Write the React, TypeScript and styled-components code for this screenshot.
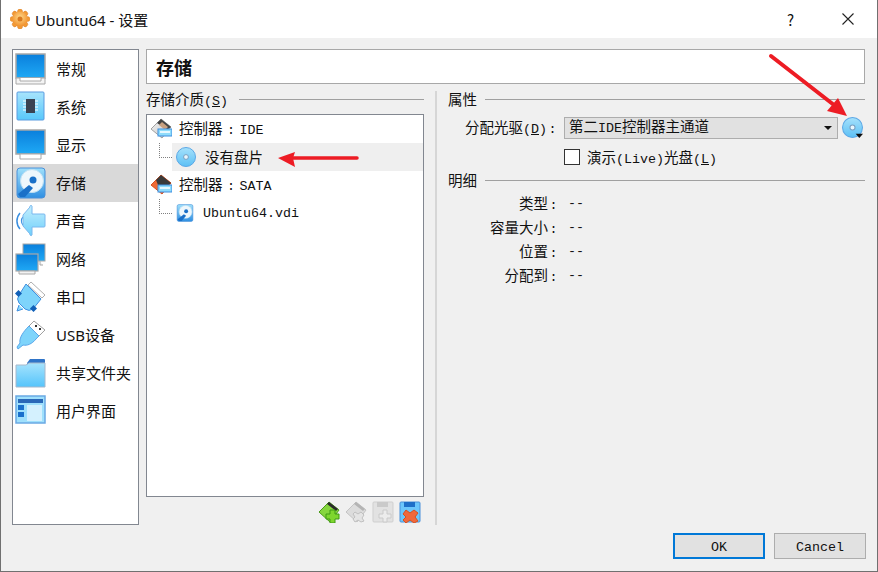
import React from "react";
import styled, { createGlobalStyle } from "styled-components";

const GlobalStyle = createGlobalStyle`
  html, body {
    margin: 0;
    padding: 0;
    background: #f0f0f0;
  }
`;

const cjk = `"Noto Sans CJK SC", "Noto Sans", sans-serif`;

const Window = styled.div`
  position: relative;
  box-sizing: border-box;
  width: 878px;
  height: 572px;
  display: flex;
  flex-direction: column;
  background: #f0f0f0;
  border-left: 1px solid #707070;
  border-right: 1px solid #707070;
  border-bottom: 1px solid #707070;
  color: #111;
  font-family: ${cjk};
  font-size: 14.5px;
  overflow: hidden;
`;

const TitleBar = styled.div`
  height: 38px;
  flex: none;
  display: flex;
  align-items: center;
  background: #fff;
  padding-left: 9px;
`;

const TitleText = styled.span`
  margin-left: 5px;
  font-size: 15px;
  flex: 1;
  font-family: "Noto Sans", ${cjk};
`;

const TitleButton = styled.span<{ $width: number }>`
  width: ${({ $width }) => $width}px;
  text-align: center;
  font-size: 15px;
`;

const CloseGlyph = styled.svg`
  display: block;
  margin: 0 auto;
`;

const Body = styled.div`
  flex: 1;
  min-height: 0;
  display: flex;
  padding: 11px 12px 0 11px;
  gap: 7px;
`;

const Sidebar = styled.div`
  box-sizing: border-box;
  width: 127px;
  height: 476px;
  flex: none;
  background: #fff;
  border: 1px solid #828790;
  display: flex;
  flex-direction: column;
`;

const SideRow = styled.div<{ $active?: boolean }>`
  height: 38px;
  flex: none;
  display: flex;
  align-items: center;
  padding-left: 2px;
  gap: 9px;
  background: ${({ $active }) => ($active ? "#d9d9d9" : "transparent")};
  white-space: nowrap;
  font-family: "Noto Sans", ${cjk};
  font-size: 15px;
`;

/* the CJK face sits low in its line box, this lifts a caption back up */
const Caption = styled.span<{ $lift?: number }>`
  padding-bottom: ${({ $lift }) => $lift ?? 2}px;
  white-space: nowrap;
`;

const Main = styled.div`
  flex: 1;
  min-width: 0;
  display: flex;
  flex-direction: column;
  height: 476px;
`;

const Header = styled.div`
  box-sizing: border-box;
  height: 35px;
  flex: none;
  background: #fff;
  border: 1px solid #a8a8a8;
  display: flex;
  align-items: center;
  padding-left: 9px;
  font-size: 18px;
  font-weight: 700;
`;

const Columns = styled.div`
  flex: 1;
  min-height: 0;
  display: flex;
  padding-top: 7px;
`;

const LeftPane = styled.div`
  width: 278px;
  flex: none;
  display: flex;
  flex-direction: column;
`;

const Splitter = styled.div`
  width: 2px;
  flex: none;
  margin: 0 11px;
  background: #d6d6d6;
`;

const RightPane = styled.div`
  flex: 1;
  min-width: 0;
  display: flex;
  flex-direction: column;
`;

const GroupTitle = styled.div<{ $gap?: number }>`
  height: 16px;
  flex: none;
  display: flex;
  align-items: center;
  gap: ${({ $gap }) => $gap ?? 8}px;
  white-space: nowrap;
  &::after {
    content: "";
    flex: 1;
    height: 1px;
    background: #a0a0a0;
  }
`;

const Mono = styled.span`
  font-family: "Liberation Mono", monospace;
  font-size: 13.33px;
`;

const Colon = styled(Mono)<{ $width: number }>`
  display: inline-block;
  width: ${({ $width }) => $width}px;
  text-align: center;
`;

const Hot = styled.span`
  text-decoration: underline;
`;

const Tree = styled.div`
  box-sizing: border-box;
  height: 383px;
  margin-top: 7px;
  flex: none;
  background: #fff;
  border: 1px solid #828790;
  display: flex;
  flex-direction: column;
`;

const TreeRow = styled.div<{ $child?: boolean; $selected?: boolean }>`
  position: relative;
  height: 28px;
  flex: none;
  display: flex;
  align-items: center;
  margin-left: ${({ $child }) => ($child ? "25px" : "0")};
  padding-left: ${({ $child }) => ($child ? "4px" : "3px")};
  gap: ${({ $child }) => ($child ? "9px" : "7px")};
  background: ${({ $selected }) => ($selected ? "#efefef" : "transparent")};
  ${({ $child }) =>
    $child &&
    `&::before {
      content: "";
      position: absolute;
      left: -13px;
      top: 0;
      width: 12px;
      height: 14px;
      border-left: 1px dotted #808080;
      border-bottom: 1px dotted #808080;
    }`}
`;

const TreeTools = styled.div`
  flex: none;
  display: flex;
  justify-content: flex-end;
  gap: 5px;
  padding: 4px 3px 0 0;
`;

const ComboRow = styled.div`
  display: flex;
  align-items: center;
  margin-top: 9px;
  padding-left: 17px;
`;

const ComboLabel = styled(Caption)`
  width: 99px;
  flex: none;
`;

const Combo = styled.div`
  box-sizing: border-box;
  width: 274px;
  height: 22px;
  flex: none;
  display: flex;
  align-items: center;
  justify-content: space-between;
  padding: 0 5px 0 4px;
  background: #e1e1e1;
  border: 1px solid #adadad;
  white-space: nowrap;
`;

const ComboArrow = styled.span`
  width: 0;
  height: 0;
  border-left: 4px solid transparent;
  border-right: 4px solid transparent;
  border-top: 4px solid #111;
`;

const CheckRow = styled.div`
  display: flex;
  align-items: center;
  gap: 7px;
  margin: 10px 0 0 116px;
  height: 16px;
`;

const CheckBox = styled.span`
  box-sizing: border-box;
  width: 16px;
  height: 16px;
  background: #fff;
  border: 1px solid #333;
`;

const DetailsTitle = styled(GroupTitle)`
  margin-top: 7px;
`;

const DetailGrid = styled.div`
  display: grid;
  grid-template-columns: 111px auto;
  column-gap: 9px;
  grid-auto-rows: 24px;
  align-items: center;
  justify-content: start;
  margin-top: 3px;
`;

const DetailLabel = styled.span`
  text-align: right;
  white-space: nowrap;
  padding-bottom: 2px;
`;

const Footer = styled.div`
  flex: none;
  display: flex;
  justify-content: flex-end;
  gap: 9px;
  padding: 8px 11px 12px 0;
`;

const DialogButton = styled.button<{ $primary?: boolean }>`
  box-sizing: border-box;
  width: 92px;
  height: 26px;
  padding: 2px 0 0;
  background: #e1e1e1;
  border: ${({ $primary }) => ($primary ? "2px solid #0078d7" : "1px solid #adadad")};
  color: #111;
  font-family: "Liberation Mono", monospace;
  font-size: 13.33px;
`;

const Annotation = styled.svg`
  position: absolute;
  left: -1px;
  top: 0;
  pointer-events: none;
`;

const Picker = styled.span`
  display: flex;
  margin-left: 4px;
`;

/* drawings */

const blue = (id: string) => (
  <linearGradient id={id} x1="0" y1="0" x2="0" y2="1">
    <stop offset="0" stopColor="#0a7fdc" />
    <stop offset="1" stopColor="#1fa9f5" />
  </linearGradient>
);

const GeneralIcon = () => (
  <svg width="32" height="32" viewBox="0 0 32 32">
    <defs>{blue("g1")}</defs>
    <rect x="1" y="1" width="29" height="24" fill="url(#g1)" stroke="#a8a8a8" strokeWidth="1.5" />
    <path d="M1 25h29v6H1z" fill="#f4f4f4" stroke="#a8a8a8" />
    <path d="M5 25v3h21v-3" fill="#fff" stroke="#a8a8a8" />
  </svg>
);

const SystemIcon = () => (
  <svg width="32" height="32" viewBox="0 0 32 32">
    <defs>
      <linearGradient id="s1" x1="0" y1="0" x2="0" y2="1">
        <stop offset="0" stopColor="#a8e4fc" />
        <stop offset="1" stopColor="#58c8fb" />
      </linearGradient>
    </defs>
    <rect x="2" y="1" width="27" height="28" rx="1" fill="url(#s1)" stroke="#5a9be0" />
    <path d="M8 10h15M8 13h15M8 16h15M8 19h15" stroke="#fff" strokeWidth="1.2" />
    <rect x="11" y="8" width="9" height="14" fill="#3a4252" />
  </svg>
);

const DisplayIcon = () => (
  <svg width="32" height="32" viewBox="0 0 32 32">
    <defs>{blue("d1")}</defs>
    <rect x="1" y="1" width="29" height="24" fill="url(#d1)" stroke="#a8a8a8" strokeWidth="1.5" />
    <path d="M5 25h21v5H5z" fill="#fff" stroke="#a8a8a8" />
  </svg>
);

const DiskIcon = ({ size, id }: { size: number; id: string }) => (
  <svg width={size} height={size} viewBox="0 0 32 32">
    <defs>
      <linearGradient id={id} x1="0" y1="0" x2="0" y2="1">
        <stop offset="0" stopColor="#9fe0fb" />
        <stop offset="1" stopColor="#2f8fe2" />
      </linearGradient>
    </defs>
    <rect x="2" y="1" width="28" height="30" rx="3" fill={`url(#${id})`} stroke="#4a90d9" />
    <circle cx="17" cy="14" r="11.5" fill="#eef7fc" stroke="#bfe0f4" />
    <circle cx="18" cy="13" r="3.5" fill="#1a70c8" />
    <path d="M3 27l11-9 4 3-8 9H5z" fill="#1a70c8" />
  </svg>
);

const AudioIcon = () => (
  <svg width="32" height="32" viewBox="0 0 32 32">
    <defs>
      <linearGradient id="a1" x1="0" y1="0" x2="0" y2="1">
        <stop offset="0" stopColor="#c4eefd" />
        <stop offset="1" stopColor="#6fd0fb" />
      </linearGradient>
    </defs>
    <path d="M5 8a12 12 0 0 0 0 16" fill="none" stroke="#3a8fe0" strokeWidth="1.5" />
    <path d="M8 12a6 6 0 0 0 0 8" fill="none" stroke="#3a8fe0" strokeWidth="1.2" />
    <path d="M8 10L15 2a1 1 0 0 1 2-1v8h12a1 1 0 0 1 1 1v11a1 1 0 0 1-1 1H17v8a1 1 0 0 1-2-1L8 21z" fill="url(#a1)" stroke="#7ab8ee" />
  </svg>
);

const NetworkIcon = () => (
  <svg width="32" height="32" viewBox="0 0 32 32">
    <defs>{blue("n1")}{blue("n2")}</defs>
    <rect x="8" y="1" width="22" height="17" fill="url(#n1)" stroke="#a8a8a8" />
    <path d="M25 18v4h3" fill="#f4f4f4" stroke="#a8a8a8" />
    <rect x="1" y="11" width="22" height="17" fill="url(#n2)" stroke="#a8a8a8" strokeWidth="1.2" />
    <path d="M4 28h16v3H4z" fill="#f2f2f2" stroke="#a8a8a8" />
  </svg>
);

const SerialIcon = () => (
  <svg width="32" height="32" viewBox="0 0 32 32">
    <path d="M16 1l14 13-3 3L13 4z" fill="#fff" stroke="#b0b0b0" />
    <path d="M11 3l15 15-8 10a7 7 0 0 1-8 0l-6-6a7 7 0 0 1 0-8z" fill="#7ed4fb" stroke="#3f8fe0" />
    <path d="M4 24l-2 6 6-2" fill="#8edcfc" stroke="#3f8fe0" />
    <rect x="1" y="10" width="5" height="5" fill="#1060b8" transform="rotate(45 3.5 12.5)" />
    <rect x="16" y="25" width="5" height="5" fill="#1060b8" transform="rotate(45 18.5 27.5)" />
  </svg>
);

const UsbIcon = () => (
  <svg width="32" height="32" viewBox="0 0 32 32">
    <path d="M19 2l11 9-6 6-10-10z" fill="#fff" stroke="#a0a0a0" />
    <rect x="20" y="6" width="2" height="2" fill="#333" />
    <rect x="24" y="9" width="2" height="2" fill="#333" />
    <path d="M14 7l10 10-3 3c-4 5-9 7-13 6l-5 4-1-2 3-4c-1-5 3-11 9-17z" fill="#7ed4fb" stroke="#5aa7ea" />
  </svg>
);

const FolderIcon = () => (
  <svg width="32" height="32" viewBox="0 0 32 32">
    <defs>
      <linearGradient id="f1" x1="0" y1="0" x2="0" y2="1">
        <stop offset="0" stopColor="#a6e3fd" />
        <stop offset="1" stopColor="#55c4fb" />
      </linearGradient>
    </defs>
    <path d="M12 6l3-4h14a1 1 0 0 1 1 1v5H12z" fill="#2f74c8" />
    <path d="M1 8h10l3-2h16v24H1z" fill="url(#f1)" stroke="#a6b8cc" />
  </svg>
);

const UiIcon = () => (
  <svg width="32" height="32" viewBox="0 0 32 32">
    <rect x="1" y="1" width="29" height="27" fill="#9fe0fc" stroke="#6aa9e4" strokeWidth="1.5" />
    <rect x="3" y="4" width="25" height="4" fill="#2a68b8" />
    <rect x="3" y="10" width="6" height="5" fill="#1a70cc" />
    <rect x="3" y="17" width="6" height="5" fill="#1a70cc" />
    <rect x="12" y="10" width="15" height="16" fill="#d4f1fe" />
  </svg>
);

const OpticalIcon = ({ size, id, menu }: { size: number; id: string; menu?: boolean }) => (
  <svg width={size} height={size} viewBox="0 0 20 20">
    <defs>
      <linearGradient id={id} x1="0" y1="0" x2="0" y2="1">
        <stop offset="0" stopColor="#a6e1fb" />
        <stop offset="1" stopColor="#5cc0f5" />
      </linearGradient>
    </defs>
    <circle cx="10" cy="10" r="9.500" fill={`url(#${id})`} stroke="#5ca8e6" />
    <circle cx="10" cy="10" r="2.400" fill="#e8f6fd" stroke="#7a9fc0" />
    {menu && <path d="M13 16h7l-3.500 4z" fill="#111" />}
  </svg>
);

const ControllerIcon = ({ id, dark }: { id: string; dark?: boolean }) => (
  <svg width="22" height="22" viewBox="0 0 22 22">
    <defs>
      <linearGradient id={id} x1="0" y1="0" x2="1" y2="1">
        <stop offset="0" stopColor="#f2f2f2" />
        <stop offset="1" stopColor="#c6c6c6" />
      </linearGradient>
    </defs>
    <path d="M1 11L11 1l10 8-9 11z" fill={dark ? "#ef6a35" : `url(#${id})`} stroke={dark ? "#d8501e" : "#a0a0a0"} />
    {dark ? (
      <path d="M6 6l5-5 10 8-6 5H8v-3z" fill="#3a3a3a" />
    ) : (
      <>
        <path d="M7 5l4-4 10 8-4 3z" fill="#444" />
        <path d="M9 7l3-3 6 5-3 3z" fill="#c8a080" />
      </>
    )}
    <rect x="8" y="11" width="14" height="7" fill="#8fdcfb" stroke="#3f8fe0" />
    <rect x="10" y="13" width="10" height="2" fill="#e6f8ff" />
  </svg>
);

const ToolIcon = ({ kind, disabled }: { kind: "ctrl" | "attach" | "add" | "remove"; disabled?: boolean }) => {
  const base = disabled ? "#dcdcdc" : "#86d63e";
  const edge = disabled ? "#c4c4c4" : "#4c9c1a";
  if (kind === "ctrl" || kind === "attach") {
    return (
      <svg width="22" height="22" viewBox="0 0 22 22">
        <path d="M1 11L11 1l10 8-9 12z" fill={base} stroke={edge} />
        <path d="M9 3l2-2 9 7-2 2z" fill={disabled ? "#b4b4b4" : "#2a2a2a"} />
        {disabled ? (
          <path d="M10 11l3 2 3-2 3 3-2 3 2 3-3 1-3-2-3 2-2-3 2-2-2-3z" fill="#e4e4e4" stroke="#c0c0c0" />
        ) : (
          <path d="M12 9h5v4h4v5h-4v4h-5v-4H8v-5h4z" fill="#7ed62e" stroke="#3f9a14" />
        )}
      </svg>
    );
  }
  return (
    <svg width="22" height="22" viewBox="0 0 22 22">
      <rect x="1" y="1" width="20" height="20" rx="1" fill={disabled ? "#e2e2e2" : "#6cc6fb"} stroke={disabled ? "#cfcfcf" : "#4a90d9"} />
      <rect x="5" y="1" width="11" height="5" fill={disabled ? "#cacaca" : "#1f6fc8"} />
      {kind === "add" ? (
        <path d="M11 9h4v4h4v4h-4v4h-4v-4H7v-4h4z" fill="#ececec" stroke="#cacaca" />
      ) : (
        <path d="M7 9l4 3 4-3 4 3-3 4 3 4-4 2-4-3-4 3-3-3 3-3-3-3z" fill="#f0683c" stroke="#d8501e" />
      )}
    </svg>
  );
};

const gearTeeth = [0, 45, 90, 135, 180, 225, 270, 315];

const AppIcon = () => (
  <svg width="20" height="20" viewBox="0 0 20 20">
    <defs>
      <radialGradient id="gear" cx="0.5" cy="0.4" r="0.6">
        <stop offset="0" stopColor="#ffd98a" />
        <stop offset="1" stopColor="#f0902c" />
      </radialGradient>
    </defs>
    {gearTeeth.map((a) => (
      <circle key={a} cx="10" cy="2.600" r="2.500" fill="#f39a34" stroke="#d97c25" strokeWidth="0.5" transform={`rotate(${a} 10 10)`} />
    ))}
    <circle cx="10" cy="10" r="7.500" fill="url(#gear)" />
    <circle cx="10" cy="10" r="2.500" fill="#d9791f" />
  </svg>
);

const sections = [
  { label: "常规", icon: <GeneralIcon /> },
  { label: "系统", icon: <SystemIcon /> },
  { label: "显示", icon: <DisplayIcon /> },
  { label: "存储", icon: <DiskIcon size={32} id="side-disk" />, active: true },
  { label: "声音", icon: <AudioIcon /> },
  { label: "网络", icon: <NetworkIcon /> },
  { label: "串口", icon: <SerialIcon /> },
  { label: "USB设备", icon: <UsbIcon /> },
  { label: "共享文件夹", icon: <FolderIcon /> },
  { label: "用户界面", icon: <UiIcon /> },
];

const details = ["类型", "容量大小", "位置", "分配到"];

export default function App() {
  return (
    <>
      <GlobalStyle />
      <Window>
        <TitleBar>
          <AppIcon />
          <TitleText>Ubuntu64 - 设置</TitleText>
          <TitleButton $width={57}>?</TitleButton>
          <TitleButton $width={58}>
            <CloseGlyph width="12" height="12" viewBox="0 0 12 12">
              <path d="M0.500 0.500l11 11M11.500 0.500l-11 11" stroke="#222" strokeWidth="1.100" />
            </CloseGlyph>
          </TitleButton>
        </TitleBar>
        <Body>
          <Sidebar>
            {sections.map((s) => (
              <SideRow key={s.label} $active={s.active}>
                {s.icon}
                <Caption $lift={2}>{s.label}</Caption>
              </SideRow>
            ))}
          </Sidebar>
          <Main>
            <Header>存储</Header>
            <Columns>
              <LeftPane>
                <GroupTitle $gap={11}>
                  <Caption>
                    存储介质<Mono>(<Hot>S</Hot>)</Mono>
                  </Caption>
                </GroupTitle>
                <Tree>
                  <TreeRow>
                    <ControllerIcon id="c-ide" />
                    <Caption $lift={4}>
                      控制器<Colon $width={17}>:</Colon><Mono>IDE</Mono>
                    </Caption>
                  </TreeRow>
                  <TreeRow $child $selected>
                    <OpticalIcon size={20} id="tree-cd" />
                    <Caption>没有盘片</Caption>
                  </TreeRow>
                  <TreeRow>
                    <ControllerIcon id="c-sata" dark />
                    <Caption $lift={4}>
                      控制器<Colon $width={17}>:</Colon><Mono>SATA</Mono>
                    </Caption>
                  </TreeRow>
                  <TreeRow $child>
                    <DiskIcon size={18} id="tree-hd" />
                    <Mono>Ubuntu64.vdi</Mono>
                  </TreeRow>
                </Tree>
                <TreeTools>
                  <ToolIcon kind="ctrl" />
                  <ToolIcon kind="attach" disabled />
                  <ToolIcon kind="add" disabled />
                  <ToolIcon kind="remove" />
                </TreeTools>
              </LeftPane>
              <Splitter />
              <RightPane>
                <GroupTitle>
                  <Caption>属性</Caption>
                </GroupTitle>
                <ComboRow>
                  <ComboLabel>
                    分配光驱<Mono>(<Hot>D</Hot>)</Mono><Colon $width={11}>:</Colon>
                  </ComboLabel>
                  <Combo>
                    <Caption $lift={5}>
                      第二<Mono>IDE</Mono>控制器主通道
                    </Caption>
                    <ComboArrow />
                  </Combo>
                  <Picker>
                    <OpticalIcon size={21} id="pick-cd" menu />
                  </Picker>
                </ComboRow>
                <CheckRow>
                  <CheckBox />
                  <Caption>
                    演示<Mono>(Live)</Mono>光盘<Mono>(<Hot>L</Hot>)</Mono>
                  </Caption>
                </CheckRow>
                <DetailsTitle>
                  <Caption>明细</Caption>
                </DetailsTitle>
                <DetailGrid>
                  {details.map((d) => (
                    <React.Fragment key={d}>
                      <DetailLabel>
                        {d}
                        <Colon $width={11}>:</Colon>
                      </DetailLabel>
                      <Mono>--</Mono>
                    </React.Fragment>
                  ))}
                </DetailGrid>
              </RightPane>
            </Columns>
          </Main>
        </Body>
        <Footer>
          <DialogButton $primary>OK</DialogButton>
          <DialogButton>Cancel</DialogButton>
        </Footer>
        <Annotation width="878" height="572" viewBox="0 0 878 572">
          <path d="M357 158L292 158" stroke="#ed1c24" strokeWidth="3.500" strokeLinecap="round" />
          <path d="M278 158L295 152L293 158L295 167z" fill="#ed1c24" />
          <path d="M771 56L834 105" stroke="#ed1c24" strokeWidth="4" strokeLinecap="round" />
          <path d="M847 116L827 111L838 98z" fill="#ed1c24" />
        </Annotation>
      </Window>
    </>
  );
}
